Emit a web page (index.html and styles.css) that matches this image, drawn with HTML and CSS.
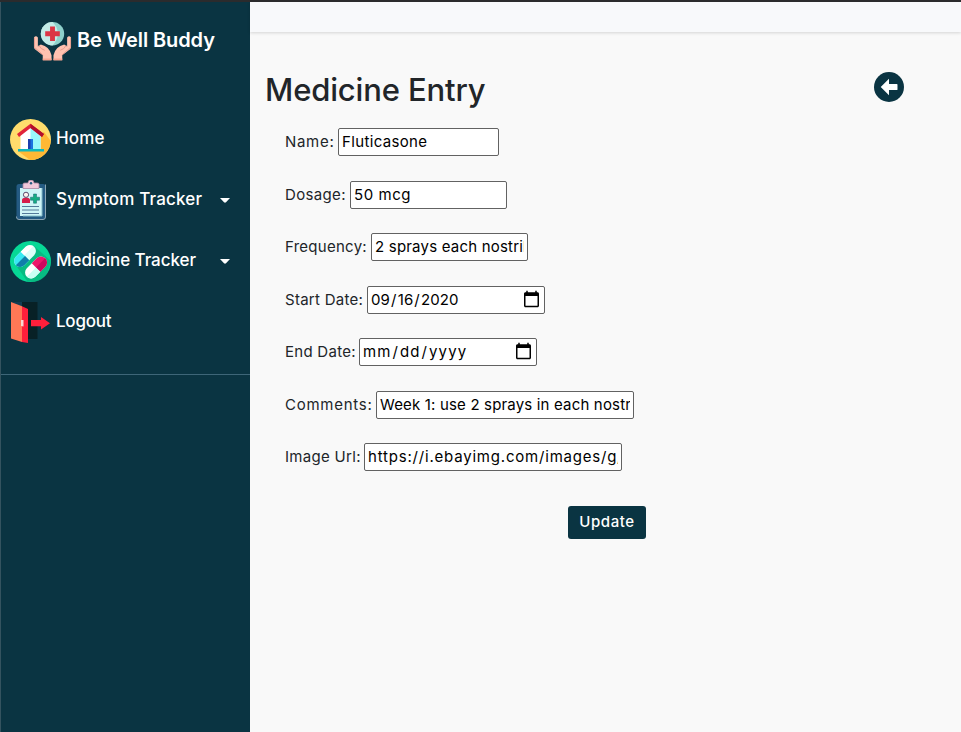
FILE: index.html
```html
<!DOCTYPE html>
<html lang="en-US">
<head>
<meta charset="utf-8">
<title>Be Well Buddy</title>
<link rel="stylesheet" href="styles.css">
</head>
<body>
<aside class="sidebar">
  <header class="brand">
    <svg class="brand-icon" viewBox="0 0 40 40">
      <circle cx="20" cy="12" r="12" fill="#8fd0cb"/>
      <path d="M20 0a12 12 0 0 0 0 24 16 16 0 0 0 0-24z" fill="#c4ebe7"/>
      <path d="M17.500 4.500h5v5h5v5h-5v5h-5v-5h-5v-5h5z" fill="#dc3545"/>
      <path d="M1 16q2-3 4 0v9l3-2q9 2 11 11v5H10v-5L2 28q-1-1-1-3z" fill="#ffc2b0"/>
      <path d="M39 16q-2-3-4 0v9l-3-2q-9 2-11 11v5h9v-5l8-6q1-1 1-3z" fill="#ffc2b0"/>
      <path d="M1.500 16v10l9 8M6 24q2 4 6 5M38.500 16v10l-9 8M34 24q-2 4-6 5" fill="none" stroke="#e69b8e"/>
      <path d="M10 37.500h9v2h-9zM21 37.500h9v2h-9z" fill="#f7a592"/>
    </svg>
    <span class="brand-name">Be Well Buddy</span>
  </header>
  <nav class="menu">
    <a class="item">
      <svg class="icon" viewBox="0 0 41 41">
        <circle cx="20.500" cy="20.500" r="20.500" fill="#ffdc6c"/>
        <path d="M34 13l6.800 9A20.500 20.500 0 0 1 20 41L8 32z" fill="#ffb834"/>
        <path d="M10.500 16L20.500 7l10 9v15h-20z" fill="#fff"/>
        <path d="M20.500 7l10 9v15h-10z" fill="#99f8fa"/>
        <path d="M18 20h5v11h-5z" fill="#1c3fae"/><path d="M20.500 20h2.500v11h-2.500z" fill="#1b74e0"/>
        <path d="M7 15L20.500 4.800 34 15l-2 3-11.500-9L9 18z" fill="#e12338"/>
        <path d="M20.500 4.800L34 15l-2 3-11.500-9z" fill="#b20d2b"/>
        <path d="M8 30h26v2.500H8z" fill="#0db7bd"/>
      </svg>
      <span class="t-home">Home</span>
    </a>
    <a class="item">
      <svg class="icon" viewBox="0 0 41 41">
        <rect x="6.500" y="4" width="29" height="35.500" rx="2.500" fill="#245b83"/>
        <path d="M6.500 36.500v.5q0 2.500 2.500 2.500h24q2.500 0 2.500-2.500V4.500" fill="none" stroke="#8ca7b5" stroke-width="1"/>
        <path d="M10 8h22v28H10z" fill="#cff5f7"/>
        <path d="M32 8v28H13" fill="none" stroke="#85bdc9"/>
        <path d="M13 8.500V4q0-1 2-1h3q0-3 3-3t3 3h3q2 0 2 1v4.500z" fill="#f1c8da" stroke="#aa84a0" stroke-width=".8"/>
        <circle cx="21" cy="3.200" r="1.200" fill="#245b83"/>
        <path d="M12 23v-3q0-2.500 4-2.500t4 2.500v3z" fill="#d51e4a"/>
        <circle cx="16" cy="14.800" r="2.600" fill="#fff1ed" stroke="#5a4b70"/>
        <path d="M23.500 14h3v3.200h3v3h-3v3h-3v-3h-3v-3h3z" fill="#14ad82" stroke="#176273" stroke-width=".5"/>
        <path d="M12 26.500h17M12 30h17M12 33.500h17" stroke="#547a9a" stroke-width="1.100"/>
      </svg>
      <span class="t-symptom">Symptom Tracker</span>
      <svg class="caret" viewBox="0 0 10 5"><path d="M0 0h10L6 4.300q-1 .7-2 0z" fill="#fff"/></svg>
    </a>
    <a class="item">
      <svg class="icon" viewBox="0 0 41 41">
        <circle cx="20.500" cy="20.500" r="20.500" fill="#06d896"/>
        <path d="M24 5L5 23l12 17q13 3 20-7l4-13z" fill="#0aa875" opacity=".6"/>
        <g transform="rotate(-45 15 15)">
          <rect x="2" y="9" width="26" height="12" rx="6" fill="#dcfff8"/>
          <path d="M15 9H8a6 6 0 0 0 0 12h7z" fill="#38e8f2"/>
          <path d="M2 15h13v6H8a6 6 0 0 1-6-6z" fill="#107eaa"/>
          <path d="M15 9h7q4 0 6 5H15z" fill="#fff"/>
        </g>
        <g transform="rotate(-45 26 26.500)">
          <rect x="13" y="20.500" width="26" height="12" rx="6" fill="#fff"/>
          <path d="M26 20.500h7a6 6 0 0 1 0 12h-7z" fill="#ed176b"/>
          <path d="M26 26.500h13a6 6 0 0 1-6 6h-7z" fill="#cc075e"/>
          <path d="M13 26.500h13v6h-7a6 6 0 0 1-6-6z" fill="#cafff4"/>
        </g>
      </svg>
      <span class="t-medicine">Medicine Tracker</span>
      <svg class="caret" viewBox="0 0 10 5"><path d="M0 0h10L6 4.300q-1 .7-2 0z" fill="#fff"/></svg>
    </a>
    <a class="item">
      <svg class="icon" viewBox="0 0 41 41">
        <path d="M1 0h26.500v37H12V0z" fill="#082126"/>
        <path d="M2 0h10v6z" fill="#123d54"/>
        <path d="M1 0l11 4.300V40L1 36.500z" fill="#ff7856"/>
        <path d="M12 4.300L18 7v34L12 40z" fill="#ff1f3b"/>
        <path d="M11 18h2.500v6.500L11 24z" fill="#f6d8d2"/>
        <path d="M21 18h10v-3l9 6.200-9 6.300v-3.300H21z" fill="#ff1f3b"/>
      </svg>
      <span class="t-logout">Logout</span>
    </a>
  </nav>
</aside>
<main class="main">
  <div class="topbar"></div>
  <section class="content">
    <div class="heading">
      <h1>Medicine Entry</h1>
      <svg class="back" viewBox="0 0 29 29">
        <circle cx="14.500" cy="14.500" r="14.500" fill="#0a3442"/>
        <path d="M6.500 14.500l8-8v5H22q.7 0 .7.700v4.600q0 .7-.7.700h-7.500v5z" fill="#fff"/>
      </svg>
    </div>
    <form class="form">
      <div class="row"><label class="l-name">Name:</label><input class="w-name" type="text" value="Fluticasone"></div>
      <div class="row"><label class="l-dosage">Dosage:</label><input class="w-short v-dosage" type="text" value="50 mcg"></div>
      <div class="row"><label class="l-frequency">Frequency:</label><input class="w-short v-frequency" type="text" value="2 sprays each nostril"></div>
      <div class="row"><label class="l-start">Start Date:</label><input class="w-date v-start" type="date" value="2020-09-16"></div>
      <div class="row"><label class="l-end">End Date:</label><input class="w-date v-end" type="date"></div>
      <div class="row"><label class="l-comments">Comments:</label><input class="w-long v-comments" type="text" value="Week 1: use 2 sprays in each nostril"></div>
      <div class="row"><label class="l-image">Image Url:</label><input class="w-long v-image" type="text" value="https://i.ebayimg.com/images/g/"></div>
      <button class="update" type="button">Update</button>
    </form>
  </section>
</main>
</body>
</html>
```
FILE: styles.css
```css
* { box-sizing: border-box; }
body {
  margin: 0;
  height: 732px;
  display: flex;
  overflow: hidden;
  border-top: 2px solid #2b2b2d;
  background: #f9f9f9;
  color: #212529;
  font-family: Inter, "Open Sans", sans-serif;
  font-size: 15px;
}
svg { display: block; flex: none; }
.sidebar {
  width: 250px;
  flex: none;
  background: #0a3442;
  border-left: 1px solid #34535f;
  color: #fff;
}
.brand { display: flex; align-items: center; height: 78px; padding-left: 32px; }
.brand-icon { width: 39px; height: 39px; margin: 1px 5px 0 0; }
.brand-name { font-size: 20px; font-weight: 600; letter-spacing: -.1px; padding-bottom: 3px; white-space: nowrap; }
.menu {
  height: 295px;
  padding: 29px 0 0;
  border-bottom: 1px solid #3e6678;
}
.item {
  display: flex;
  align-items: center;
  height: 61px;
  padding: 0 20px 0 9px;
  font-size: 17px;
  font-weight: 500;
  white-space: nowrap;
}
.item span { margin-left: 5px; padding-bottom: 3px; }
.t-home { letter-spacing: .15px; }
.t-symptom { letter-spacing: .17px; }
.t-medicine { letter-spacing: -.06px; }
.t-logout { letter-spacing: -.25px; }
.icon { width: 41px; height: 41px; }
.caret { width: 10px; height: 5px; margin-left: auto; }
.main { flex: 1; }
.topbar { height: 30px; background: #f8f9fb; box-shadow: 0 1px 3px rgba(0, 0, 0, .15); }
.content { padding: 38px 57px 0 15px; }
.heading { display: flex; justify-content: space-between; height: 58px; }
h1 { margin: 1px 0 0; font-size: 31px; font-weight: 500; line-height: 38px; letter-spacing: -.15px; white-space: nowrap; }
.back { width: 30px; height: 30px; margin-top: 2px; }
.form { padding-left: 20px; }
.row { display: flex; align-items: center; height: 28px; margin-bottom: 24.5px; }
label { flex: none; padding-bottom: 1px; white-space: nowrap; }
input {
  height: 28px;
  padding: 0 3px 1px;
  border: 1px solid #626262;
  border-radius: 2px;
  background: #fff;
  color: #000;
  font: inherit;
  letter-spacing: .35px;
}
input[type="date"] { padding-left: 2px; padding-right: 2px; }
input::-webkit-calendar-picker-indicator { width: 19px; height: 19px; padding: 1px; }
.l-name { width: 53px; letter-spacing: .7px; }
.l-dosage { width: 65px; letter-spacing: .35px; }
.l-frequency { width: 86px; letter-spacing: .27px; }
.l-start { width: 82px; letter-spacing: .27px; }
.l-end { width: 74px; letter-spacing: .27px; }
.l-comments { width: 91px; letter-spacing: .75px; }
.l-image { width: 79px; letter-spacing: .3px; }
.w-name { width: 161px; }
.w-short { width: 157px; }
.w-date { width: 178px; }
.w-long { width: 258px; }
.v-dosage { letter-spacing: .55px; }
.v-frequency { letter-spacing: .2px; }
.v-start { letter-spacing: .15px; }
.v-end { letter-spacing: 1.1px; }
.v-comments { letter-spacing: .17px; }
.v-image { letter-spacing: .8px; }
.update {
  display: block;
  width: 78px;
  height: 33px;
  margin: 35px 0 0 283px;
  padding: 0 0 2px;
  border: 0;
  border-radius: 3px;
  background: #0a3442;
  color: #fff;
  font: 500 15px Inter, sans-serif;
  letter-spacing: .6px;
}
```
